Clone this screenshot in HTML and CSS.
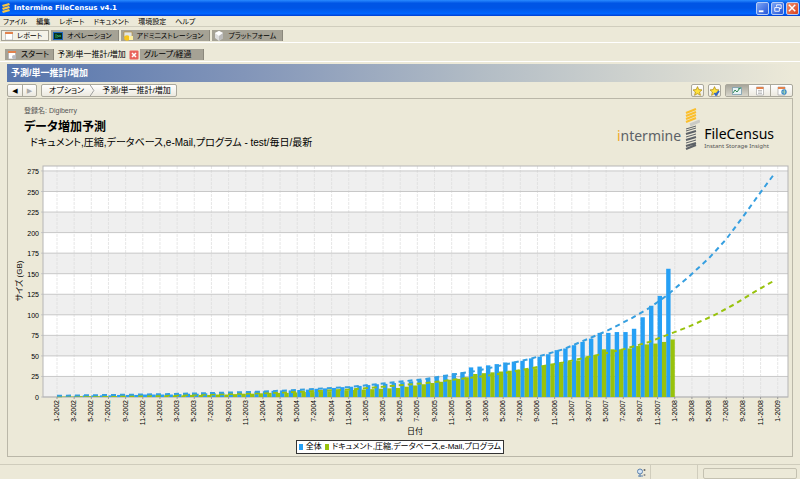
FILE: index.html
```html
<!DOCTYPE html>
<html lang="ja">
<head>
    <meta charset="UTF-8">
    <meta name="viewport" content="width=device-width, initial-scale=1.0">
    <title>Intermine FileCensus v4.1</title>
    <link rel="stylesheet" href="styles.css">
</head>
<body>
    <!-- Window title -->
    <header class="title-bar">
        <svg class="icon" viewBox="0 0 10 10"><path d="M1 2l7-2 1 2-7 2zM1 5l7-2 1 2-7 2zM1 8l7-2 1 2-7 2z" fill="#f5c646"/></svg>
        <h1>Intermine FileCensus v4.1</h1>
        <div class="window-buttons">
            <button aria-label="Minimize"><svg viewBox="0 0 12 12"><path d="M2 9h5" stroke="#fff" stroke-width="2"/></svg></button>
            <button aria-label="Restore"><svg viewBox="0 0 12 12"><path d="M5 4V2h5v4H8M3 5h5v4H3z" fill="none" stroke="#fff"/></svg></button>
            <button class="close" aria-label="Close"><svg viewBox="0 0 12 12"><path d="M2 2l7 7M9 2L2 9" stroke="#fff" stroke-width="1.6"/></svg></button>
        </div>
    </header>

    <nav class="menu-bar">
        <a href="#">ファイル</a>
        <a href="#">編集</a>
        <a href="#">レポート</a>
        <a href="#">ドキュメント</a>
        <a href="#">環境設定</a>
        <a href="#">ヘルプ</a>
    </nav>

    <!-- Module tabs -->
    <div class="tabs main-tabs">
        <button class="active"><svg class="icon" viewBox="0 0 10 10"><path d="M1.5 1h7v8h-7z" fill="#fff" stroke="#aaa" stroke-width=".6"/><path d="M1 1h8v2H1z" fill="#e2824c"/></svg>レポート</button>
        <button><svg class="icon" viewBox="0 0 10 10"><path d="M0 1h10v8H0z" fill="#1d66c0"/><path d="M1 2h8v6H1z" fill="#062e22"/><path d="M2 4h2l1 1h3M2 6h3l1-1h2" stroke="#2c9c55" fill="none"/></svg>オペレーション</button>
        <button><svg class="icon" viewBox="0 0 10 10"><path d="M1 1h8v5H1z" fill="#dfe5e8" stroke="#b98c27" stroke-width=".6"/><circle cx="4" cy="7" r="2.8" fill="#f7c51e"/><path d="M6 5h4v4H6z" fill="#fff0a0"/></svg>アドミニストレーション</button>
        <button><svg class="icon" viewBox="0 0 10 10"><path d="M5 0l4 2v5L5 10 1 7V2z" fill="#ddd"/><path d="M5 0l4 2-4 3-4-3z" fill="#fff"/><path d="M5 5v5l4-3V2z" fill="#bbb"/></svg>プラットフォーム</button>
    </div>

    <!-- Open documents -->
    <div class="tabs doc-tabs">
        <button><svg class="icon" viewBox="0 0 10 10"><path d="M1.5 1h7v8h-7z" fill="#fff" stroke="#aaa" stroke-width=".6"/><path d="M1 1h8v2H1z" fill="#e2824c"/><circle cx="7" cy="7" r="2" fill="#b8bac0"/></svg>スタート</button>
        <button class="active">予測/単一推計/増加<svg class="icon" viewBox="0 0 10 10"><rect x=".5" y=".5" width="9" height="9" rx="1" fill="#e9635c"/><path d="M3 3l4 4M7 3L3 7" stroke="#fff" stroke-width="1.5"/></svg></button>
        <button class="last">グループ/経過</button>
    </div>

    <main>
        <h2>予測/単一推計/増加</h2>

        <div class="toolbar">
            <div class="group arrows">
                <button aria-label="Back">◀</button>
                <button aria-label="Forward" disabled>▶</button>
            </div>
            <div class="group crumbs">
                <button>オプション</button>
                <svg class="chevron" viewBox="0 0 6 12"><path d="M1 0l4 6-4 6" fill="none" stroke="#999"/></svg>
                <button>予測/単一推計/増加</button>
            </div>
            <div class="group star"><button aria-label="Favorite"><svg class="icon" viewBox="0 0 10 10"><path d="M5 .6l1.3 3 3.2.3-2.4 2.1.8 3.3L5 7.6 2.1 9.3l.8-3.3L.5 3.9l3.2-.3z" fill="#ffe23b" stroke="#a98513" stroke-width=".7"/></svg></button></div>
            <div class="group star"><button aria-label="Apply favorite"><svg class="icon" viewBox="0 0 10 10"><path d="M5 .6l1.3 3 3.2.3-2.4 2.1.8 3.3L5 7.6 2.1 9.3l.8-3.3L.5 3.9l3.2-.3z" fill="#ffe23b" stroke="#a98513" stroke-width=".7"/><path d="M5 7l1.5 2 3-4" fill="none" stroke="#2d63c8" stroke-width="1.8"/></svg></button></div>
            <div class="group views">
                <button class="selected" aria-label="Chart"><svg class="icon" viewBox="0 0 10 10"><path d="M.5 1.5h9v7h-9z" fill="#e6f2f5" stroke="#6b93a8" stroke-width=".7"/><path d="M1 7l2-3 2 2 3-4M6 3l3-1" fill="none" stroke="#348a56"/></svg></button>
                <button aria-label="Table"><svg class="icon" viewBox="0 0 10 10"><path d="M1.5 1h7v8h-7z" fill="#fff" stroke="#999" stroke-width=".6"/><path d="M1.5 1h7v2h-7z" fill="#e2824c"/><path d="M3 4.5h4M3 6h4M3 7.5h4" stroke="#999" stroke-width=".6"/></svg></button>
                <button aria-label="Export"><svg class="icon" viewBox="0 0 10 10"><path d="M1 1h7v8H1z" fill="#fff" stroke="#999" stroke-width=".6"/><path d="M1 1h7v2H1z" fill="#e2824c"/><circle cx="7" cy="6" r="2.7" fill="#388ac9"/><path d="M5 6h3M7 4l1 2-1 2" fill="none" stroke="#c7e5a8" stroke-width=".8"/></svg></button>
            </div>
        </div>

        <section class="report">
            <div class="report-head">
                <div>
                    <p class="owner">登録名: Digiberry</p>
                    <h3>データ増加予測</h3>
                    <p class="filter">ドキュメント,圧縮,データベース,e-Mail,プログラム - test/毎日/最新</p>
                </div>
                <div class="logo">
                    <span class="intermine"><b>i</b>ntermine</span>
                    <svg viewBox="0 0 15 42">
                        <g fill="none">
                            <path d="M1 5l10-4M1 8l10-4M1 11l10-4M1 14l10-4" stroke="#fbbf2d" stroke-width="2.2"/>
                            <path d="M5 17l10-4" stroke="#c9c9c4" stroke-width="3"/>
                            <path d="M1 21l10-3M1 23l10-3M1 29l10-3M1 35l10-3" stroke="#5d6267" stroke-width="1"/>
                            <path d="M1 26l10-3M1 32l10-3M1 38l10-3M1 41l10-4" stroke="#5d6267" stroke-width="2"/>
                        </g>
                    </svg>
                    <span class="filecensus">FileCensus<small>Instant Storage Insight</small></span>
                </div>
            </div>

            <svg id="chart" class="chart" viewBox="0 0 784 280" role="img" aria-label="データ増加予測"></svg>

            <div class="legend">
                <span class="swatch total"></span>
                <span>全体</span>
                <span class="swatch docs"></span>
                <span>ドキュメント,圧縮,データベース,e-Mail,プログラム</span>
            </div>
        </section>
    </main>

    <footer class="status-bar">
        <span class="status-icon"><svg class="icon" viewBox="0 0 10 10"><circle cx="4" cy="3.5" r="2.5" fill="#d7e6f5" stroke="#5c82ad"/><path d="M2 8h5M4 6v3" stroke="#5c82ad"/><circle cx="8.5" cy="2" r="1" fill="#666"/><circle cx="8.5" cy="7" r="1" fill="#888"/></svg></span>
        <span class="status-cell"></span>
        <span class="status-progress"></span>
    </footer>

    <script src="chart.js"></script>
</body>
</html>
```
FILE: styles.css
```css
* {
    box-sizing: border-box;
}

body {
    margin: 0;
    min-height: 100vh;
    display: flex;
    flex-direction: column;
    background-color: #ece9d8;
    color: #000;
    font-family: "Liberation Sans", "Noto Sans CJK JP", sans-serif;
    font-size: 8px;
    line-height: 12px;
    font-feature-settings: "palt";
}

h1, h2, h3, p {
    margin: 0;
}

button {
    margin: 0;
    padding: 0;
    border: none;
    background: none;
    color: inherit;
    font: inherit;
    font-feature-settings: inherit;
}

.icon {
    width: 10px;
    height: 10px;
    flex: none;
}

/* Title bar */
.title-bar {
    display: flex;
    align-items: center;
    gap: 3px;
    height: 16px;
    padding: 0 1px;
    background: linear-gradient(#2a8bff, #0055e5 20%, #0055e5 50%, #0066ff 85%, #003dd0);
    color: #fff;
}

.title-bar h1 {
    flex: 1;
    font-family: "DejaVu Sans", sans-serif;
    font-size: 7px;
    font-weight: bold;
}

.window-buttons {
    display: flex;
    gap: 2px;
}

.window-buttons button {
    width: 13px;
    height: 13px;
    border: 1px solid #b5ccf5;
    border-radius: 2px;
    background: linear-gradient(135deg, #7da5f5, #2456d8);
}

.window-buttons .close {
    background: linear-gradient(135deg, #f0916f, #d8401c);
}

.window-buttons svg {
    display: block;
}

/* Menu */
.menu-bar {
    display: flex;
    gap: 9px;
    height: 11px;
    padding: 0 3px;
    border-bottom: 1px solid #d0cdbd;
    font-size: 7px;
    line-height: 11px;
}

.menu-bar a {
    color: inherit;
    text-decoration: none;
}

/* Tabs */
.tabs {
    display: flex;
    align-items: flex-end;
    gap: 2px;
    border-bottom: 1px solid #fff;
}

.tabs button {
    display: flex;
    align-items: center;
    gap: 4px;
    height: 11px;
    padding: 0 6px 0 2px;
    background-color: #a5a295;
    border-right: 1px solid #8b887c;
}

.main-tabs {
    height: 16px;
    padding: 0 1px 1px;
    font-size: 7px;
}

.main-tabs .active {
    gap: 3px;
    border: 1px solid #a5a295;
    background-color: #f4f2e8;
}

.doc-tabs {
    gap: 1px;
    height: 19px;
    padding: 0 5px 1px;
}

.doc-tabs button {
    padding: 0 4px 0 2px;
}

.doc-tabs .active {
    background: none;
    border: none;
    gap: 3px;
    padding: 0 0 0 2px;
}

.doc-tabs .last {
    padding: 0 12px 0 4px;
}

main {
    flex: 1;
    display: flex;
    flex-direction: column;
    margin: 2px 7px 7px;
}

h2 {
    height: 18px;
    padding-left: 4px;
    background: linear-gradient(90deg, #5675ad, #8295b9 30%, #b2bcc5 60%, #ece9d8);
    color: #fff;
    font-size: 9px;
    line-height: 18px;
}

/* Toolbar */
.toolbar {
    display: flex;
    align-items: center;
    gap: 4px;
    padding: 2px 0 1px;
}

.group {
    display: flex;
    align-items: center;
    height: 13px;
    border: 1px solid #aaa89c;
    border-radius: 2px;
    background: linear-gradient(#fff, #ece9df);
}

.group button {
    display: flex;
    align-items: center;
    justify-content: center;
    height: 11px;
}

.arrows button {
    width: 14px;
    font-family: "DejaVu Sans", sans-serif;
    font-size: 7px;
}

.arrows button + button {
    border-left: 1px solid #aaa89c;
    color: #aaa;
}

.crumbs {
    margin-right: auto;
}

.crumbs button {
    padding: 0 5px 0 7px;
}

.chevron {
    width: 6px;
    height: 11px;
}

.star button {
    width: 11px;
}

.star .icon {
    width: 11px;
}

.views button {
    width: 22px;
}

.views button + button {
    border-left: 1px solid #aaa89c;
}

.views .selected {
    background: linear-gradient(#a8a69b, #d8d6cb);
}

/* Report */
.report {
    flex: 1;
    border: 1px solid #bab7a8;
}

.report-head {
    display: flex;
    justify-content: space-between;
    padding: 6px 18px 0 16px;
}

.owner {
    color: #555;
    font-size: 7px;
}

h3 {
    font-size: 12px;
    line-height: 20px;
}

.filter {
    padding-left: 6px;
    font-size: 10px;
}

.logo {
    display: flex;
    align-items: center;
    gap: 4px;
    height: 42px;
    margin-top: 3px;
    font-family: "Noto Sans", sans-serif;
}

.logo svg {
    width: 15px;
    height: 42px;
}

.intermine {
    padding-top: 14px;
    color: #5d6267;
    font-size: 14px;
}

.intermine b {
    color: #f0a928;
    font-weight: normal;
}

.filecensus {
    padding-top: 17px;
    font-size: 14px;
    line-height: 16px;
}

.filecensus small {
    display: block;
    color: #555;
    font-size: 6px;
    line-height: 8px;
}

/* Chart */
.chart {
    display: block;
    width: 100%;
    margin-top: 10px;
    font-size: 7px;
}

.chart .axis-title {
    font-size: 8px;
}

.legend {
    display: flex;
    align-items: center;
    gap: 3px;
    width: fit-content;
    height: 14px;
    margin: 0 auto;
    padding: 0 2px;
    border: 1px solid #333;
    background-color: #fff;
}

.swatch {
    width: 4px;
    height: 6px;
}

.swatch.total {
    background-color: #26a0f5;
}

.swatch.docs {
    background-color: #98c20c;
}

/* Status bar */
.status-bar {
    display: flex;
    justify-content: flex-end;
    height: 15px;
    border-top: 1px solid #cfccbc;
}

.status-icon {
    padding: 3px 4px 0 0;
    border-right: 1px solid #d0cdbd;
}

.status-cell {
    width: 47px;
    border-right: 1px solid #d0cdbd;
}

.status-progress {
    width: 94px;
    height: 11px;
    margin: 3px 3px 0 5px;
    border: 1px solid #c4c1b1;
    border-radius: 2px;
}
```
FILE: chart.js
```js
const svg = document.getElementById('chart');

const LEFT = 35;
const RIGHT = 780;
const TOP = 6;
const BASE = 237;
const FIRST = 49;
const MONTH = 8.58;
const GB = 0.822;

// monthly sizes in GB, January 2002 to December 2007
const total = [
    1, 1.5, 1.5, 2, 2, 2, 2, 2.5, 2.5, 2.5, 3, 3,
    3, 3, 3.5, 4, 4, 4.5, 4.5, 5, 5.5, 5.5, 6, 6.5,
    7, 7.5, 8, 8, 8.5, 9, 10, 10.5, 11, 12, 12.5, 13.5,
    14.5, 15.5, 16, 17, 18, 19, 20.5, 22, 24, 27, 29, 30,
    36, 37, 38.5, 40, 42, 43, 44, 47, 49, 52, 57, 59,
    63, 67, 71, 78, 78, 79, 79, 83, 97, 111, 123, 156
];
const docs = [
    0.5, 0.5, 1, 1, 1, 1, 1, 1.5, 1.5, 1.5, 1.5, 2,
    2, 2, 2, 2.5, 2.5, 2.5, 3, 3, 3.5, 4, 4, 4.5,
    5, 5, 5, 5.5, 6, 6, 7, 7, 7.5, 8, 8.5, 9,
    9.5, 10, 10.5, 11, 12.5, 14, 15.5, 17, 18.5, 21, 22, 24,
    28, 29, 30, 31, 32, 33, 34, 35, 38, 39, 41, 43,
    44.5, 48, 51, 58, 58, 58, 59, 62, 64, 65, 67, 70
];

// forecast curves as [month index, GB]
const totalTrend = [[0, 1.5], [13, 3.5], [24, 6.5], [34, 12], [43, 22], [49, 32], [55, 46], [59, 58], [64, 80], [67, 96], [69, 108], [71, 123], [73.5, 145], [76, 169], [78, 192], [80, 220], [82, 249], [83.5, 270]];
const docsTrend = [[0, 1], [13, 2], [24, 4.5], [34, 9], [43, 17], [51, 27], [59, 42], [66, 58], [69, 67], [71, 75], [73.5, 85], [76.5, 99], [79, 113], [81, 126], [83.5, 141]];

function add(tag, attrs, text) {
    const el = document.createElementNS('http://www.w3.org/2000/svg', tag);
    for (const key in attrs) {
        el.setAttribute(key, attrs[key]);
    }
    if (text !== undefined) {
        el.textContent = text;
    }
    svg.appendChild(el);
}

function drawTrend(points, color) {
    const line = points.map(p => `${FIRST + p[0] * MONTH},${BASE - p[1] * GB}`).join(' ');
    add('polyline', { points: line, fill: 'none', stroke: color, 'stroke-width': 2, 'stroke-dasharray': '5 4' });
}

// plot area with alternating bands
add('rect', { x: LEFT, y: TOP, width: RIGHT - LEFT, height: BASE - TOP, fill: '#fff' });
for (let gb = 0; gb < 275; gb += 50) {
    add('rect', { x: LEFT, y: BASE - (gb + 25) * GB, width: RIGHT - LEFT, height: 25 * GB, fill: '#efefef' });
}

for (let m = 0; m <= 84; m += 2) {
    const x = FIRST + m * MONTH;
    add('line', { x1: x, x2: x, y1: TOP, y2: BASE, stroke: '#dcdcdc', 'stroke-width': 0.7, 'stroke-dasharray': '3 1' });
}
for (let gb = 0; gb <= 275; gb += 25) {
    const y = BASE - gb * GB;
    add('line', { x1: LEFT - 2, x2: RIGHT, y1: y, y2: y, stroke: '#c8c8c8', 'stroke-width': 1 });
    add('text', { x: LEFT - 4, y: y + 3, 'text-anchor': 'end' }, gb);
}
add('rect', { x: LEFT, y: TOP, width: RIGHT - LEFT, height: BASE - TOP, fill: 'none', stroke: '#b5b5b5' });

total.forEach((gb, i) => {
    add('rect', { x: FIRST + i * MONTH, y: BASE - gb * GB, width: 4.4, height: gb * GB, fill: '#26a0f5' });
});
docs.forEach((gb, i) => {
    add('rect', { x: FIRST + i * MONTH + 4.3, y: BASE - gb * GB, width: 4.3, height: gb * GB, fill: '#98c20c' });
});
drawTrend(docsTrend, '#98c20c');
drawTrend(totalTrend, '#369fe0');

for (let m = 0; m <= 84; m += 2) {
    const x = FIRST + m * MONTH;
    const label = `${m % 12 + 1}-${2002 + Math.floor(m / 12)}`;
    add('line', { x1: x, x2: x, y1: BASE, y2: BASE + 2, stroke: '#999' });
    add('text', { transform: `translate(${x + 2} ${BASE + 3}) rotate(-90)`, 'text-anchor': 'end' }, label);
}

add('text', { class: 'axis-title', transform: 'translate(14 121) rotate(-90)', 'text-anchor': 'middle' }, 'サイズ (GB)');
add('text', { class: 'axis-title', x: 407, y: 274, 'text-anchor': 'middle' }, '日付');
```
